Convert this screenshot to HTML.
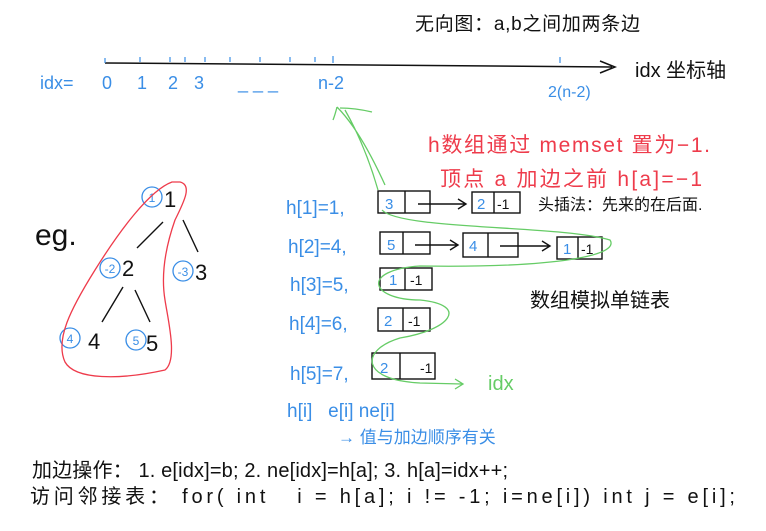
<!DOCTYPE html>
<html><head><meta charset="utf-8"><style>
html,body{margin:0;padding:0;background:#fff;}
svg{display:block}
text{font-family:"Liberation Sans","Noto Sans CJK SC",sans-serif;}
.b{fill:#3a8ee6}.r{fill:#ee3b4b}.k{fill:#111}.g{fill:#66cc66}
</style></head><body>
<svg width="766" height="531" viewBox="0 0 766 531" xmlns="http://www.w3.org/2000/svg">
<text x="415" y="30" class="k" font-size="19" textLength="225">无向图：a,b之间加两条边</text>
<!-- axis -->
<path d="M105 63 L612 67 M600 61 L615 67 L600 73" stroke="#111" stroke-width="1.5" fill="none"/>
<path d="M105 58v5 M140 57v5 M170 57v5 M185 57v5 M205 57v5 M230 57v5 M260 57v5 M290 57v5 M315 57v5 M333 56v7 M560 57v6" stroke="#3a8ee6" stroke-width="1.2"/>
<text x="635" y="77" class="k" font-size="20">idx 坐标轴</text>
<g class="b" font-size="18">
<text x="40" y="89">idx=</text><text x="102" y="89">0</text><text x="137" y="89">1</text><text x="168" y="89">2</text><text x="194" y="89">3</text>
<text x="238" y="89">_ _ _</text><text x="318" y="89">n-2</text>
</g>
<text x="548" y="97" class="b" font-size="16">2(n-2)</text>
<!-- green up arrow -->
<path d="M385 185 Q360 130 337 107 M340 108 Q355 108 372 112 M337 107 Q335 115 333 120 M378 190 Q365 145 345 110" stroke="#66cc66" stroke-width="1.3" fill="none"/>
<text x="428" y="152" class="r" font-size="21" textLength="282">h数组通过 memset 置为−1.</text>
<text x="440" y="186" class="r" font-size="21" textLength="262">顶点 a 加边之前 h[a]=−1</text>
<!-- tree -->
<text x="35" y="245" class="k" font-size="30">eg.</text>
<g stroke="#3a8ee6" stroke-width="1.3" fill="none">
<circle cx="152" cy="197" r="10"/><circle cx="110" cy="268" r="10"/><circle cx="183" cy="271" r="10"/><circle cx="70" cy="338" r="10"/><circle cx="136" cy="340" r="10"/>
</g>
<g class="b" font-size="12" text-anchor="middle"><text x="152" y="202">1</text><text x="110" y="273">-2</text><text x="183" y="276">-3</text><text x="70" y="343">4</text><text x="136" y="345">5</text></g>
<g class="k" font-size="22"><text x="164" y="207">1</text><text x="122" y="276">2</text><text x="195" y="280">3</text><text x="88" y="349">4</text><text x="146" y="351">5</text></g>
<path d="M163 222 L137 248 M183 220 L198 252 M123 287 L102 322 M135 290 L150 322" stroke="#111" stroke-width="1.4" fill="none"/>
<path d="M172 182 C150 190 120 230 95 270 C70 310 55 340 65 362 C75 380 120 380 165 370 C178 360 168 320 165 300 C160 270 168 240 175 220 C185 200 192 185 180 182 Z" stroke="#ee3b4b" stroke-width="1.3" fill="none"/>
<!-- h rows -->
<g class="b" font-size="19">
<text x="286" y="214">h[1]=1,</text>
<text x="288" y="253">h[2]=4,</text>
<text x="290" y="291">h[3]=5,</text>
<text x="289" y="330">h[4]=6,</text>
<text x="290" y="380">h[5]=7,</text>
<text x="287" y="417">h[i]&#160;&#160;&#160;e[i] ne[i]</text>
<text x="338" y="443" font-size="17">→ 值与加边顺序有关</text>
</g>
<g stroke="#111" stroke-width="1.4" fill="none">
<rect x="378" y="191" width="52" height="22"/><line x1="405" y1="191" x2="405" y2="213"/>
<rect x="472" y="192" width="48" height="21"/><line x1="494" y1="192" x2="494" y2="213"/>
<path d="M418 204 H465 M458 199 L466 204 L458 209"/>
<rect x="380" y="232" width="50" height="22"/><line x1="403" y1="232" x2="403" y2="254"/>
<rect x="463" y="233" width="55" height="24"/><line x1="488" y1="233" x2="488" y2="257"/>
<rect x="557" y="237" width="45" height="22"/><line x1="578" y1="237" x2="578" y2="259"/>
<path d="M415 245 H458 M450 240 L458 245 L450 250 M500 246 H550 M542 241 L550 246 L542 251"/>
<rect x="380" y="268" width="52" height="22"/><line x1="405" y1="268" x2="405" y2="290"/>
<rect x="378" y="308" width="52" height="23"/><line x1="403" y1="308" x2="403" y2="331"/>
<rect x="372" y="353" width="63" height="26"/><line x1="400" y1="353" x2="400" y2="379"/>
</g>
<g class="b" font-size="15">
<text x="385" y="209">3</text><text x="477" y="209">2</text><text x="387" y="250">5</text><text x="469" y="251">4</text><text x="563" y="254">1</text>
<text x="389" y="285">1</text><text x="384" y="326">2</text><text x="380" y="373">2</text>
</g>
<g class="k" font-size="14"><text x="497" y="209">-1</text><text x="581" y="254">-1</text><text x="410" y="285">-1</text><text x="408" y="326">-1</text><text x="420" y="373">-1</text></g>
<path d="M382 210 C400 230 560 225 610 240 C620 255 560 268 420 266 C360 270 370 300 420 300 C470 305 450 330 400 338 C360 350 360 380 420 383 L462 384 M455 379 L463 384 L455 389" stroke="#66cc66" stroke-width="1.3" fill="none"/>
<text x="488" y="390" class="g" font-size="20">idx</text>
<text x="538" y="210" class="k" font-size="16">头插法：先来的在后面.</text>
<text x="530" y="307" class="k" font-size="20">数组模拟单链表</text>
<text x="32" y="477" class="k" font-size="20" textLength="476">加边操作： 1. e[idx]=b; 2. ne[idx]=h[a]; 3. h[a]=idx++;</text>
<text x="30" y="503" class="k" font-size="20" textLength="705">访问邻接表： for( int&#160;&#160;&#160;i = h[a]; i != -1; i=ne[i]) int j = e[i];</text>
</svg>
</body></html>
